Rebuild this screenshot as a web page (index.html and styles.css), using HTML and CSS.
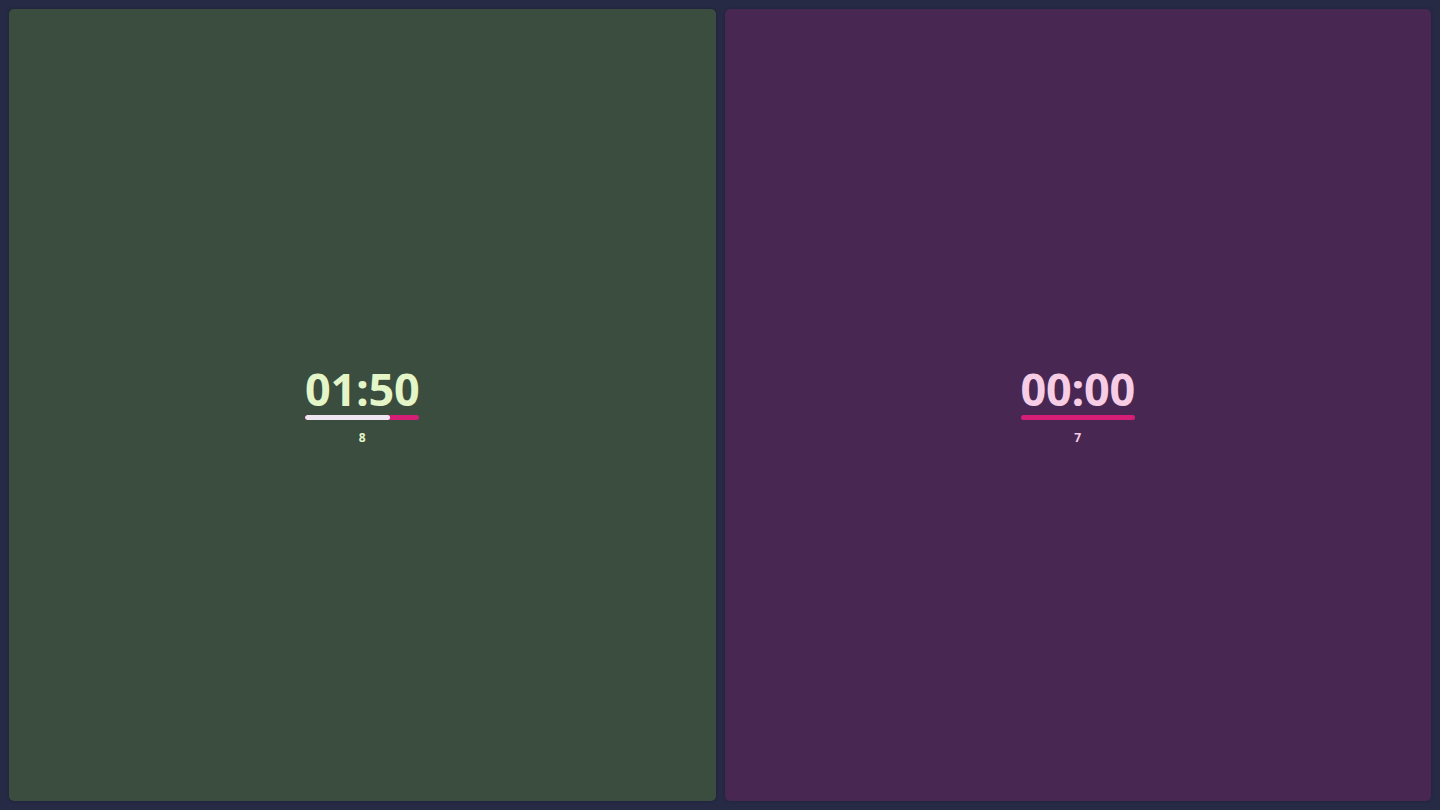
FILE: index.html
```html
<!DOCTYPE html>
<html>
<head>
<meta charset="utf-8">
<link rel="stylesheet" href="styles.css">
</head>
<body>
<main class="board">
  <section class="panel panel-green">
    <div class="timer">
      <div class="time">01:50</div>
      <div class="bar"><div class="bar-fill" style="width:74%"></div></div>
      <div class="count">8</div>
    </div>
  </section>
  <section class="panel panel-purple">
    <div class="timer">
      <div class="time">00:00</div>
      <div class="bar"><div class="bar-fill" style="width:0%"></div></div>
      <div class="count">7</div>
    </div>
  </section>
</main>
</body>
</html>
```
FILE: styles.css
```css
html, body {
  margin: 0;
  padding: 0;
  height: 100%;
  background: #262a45;
  font-family: "Open Sans", "Noto Sans", sans-serif;
}
.board {
  box-sizing: border-box;
  height: 810px;
  padding: 9px;
  display: grid;
  grid-template-columns: 1fr 1fr;
  gap: 9px;
}
.panel {
  border-radius: 5px;
  display: flex;
  align-items: center;
  justify-content: center;
  box-shadow: 0 0 3px rgba(0,0,0,0.25);
}
.panel-green { background: #3a4d3e; color: #e4f6c8; }
.panel-purple { background: #482852; color: #f7cde6; }
.timer {
  display: flex;
  flex-direction: column;
  align-items: stretch;
  transform: translateY(1px);
}
.time {
  font-size: 45px;
  font-weight: 700;
  line-height: 46px;
  letter-spacing: -0.3px;
  text-align: center;
}
.bar {
  height: 5px;
  margin-top: 3px;
  border-radius: 3px;
  background: #d51f76;
  overflow: hidden;
}
.bar-fill {
  height: 100%;
  background: #efe6f3;
  border-radius: 3px;
}
.count {
  margin-top: 10px;
  font-size: 12px;
  font-weight: 700;
  line-height: 16px;
  text-align: center;
}
```
